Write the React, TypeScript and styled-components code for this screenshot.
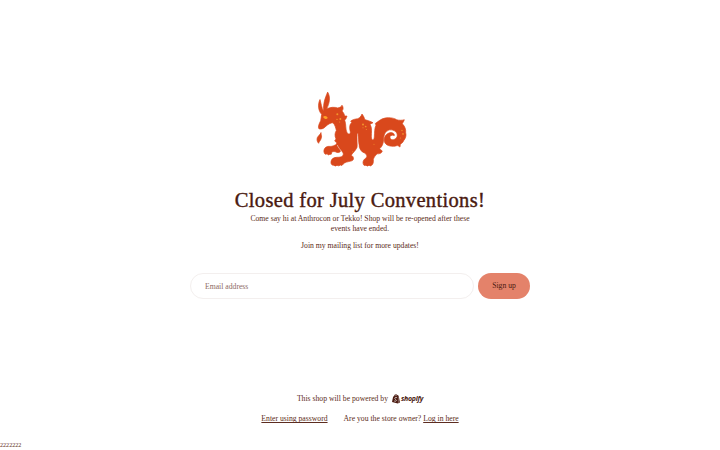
import React from 'react'
import styled, { createGlobalStyle } from 'styled-components'

const GlobalStyle = createGlobalStyle`
  * {
    box-sizing: border-box;
  }
  body {
    margin: 0;
    background: #fff;
    color: #5c2c20;
    font-family: 'Liberation Serif', serif;
    font-size: 7.7px;
    line-height: 9.6px;
  }
`

const Page = styled.div`
  display: flex;
  flex-direction: column;
  align-items: center;
  height: 450px;
  padding-top: 82px;
  overflow: hidden;
  & > * {
    flex-shrink: 0;
  }
`

const Logo = styled.svg`
  display: block;
  width: 110px;
  height: 91px;
`

const Title = styled.h1`
  margin: 15px 0 0;
  color: #4a1a10;
  font-size: 20.5px;
  font-weight: 400;
  line-height: 25px;
  letter-spacing: 0.34px;
  white-space: nowrap;
  -webkit-text-stroke: 0.4px #4a1a10;
`

const Message = styled.div`
  width: 230px;
  margin-top: 1px;
  line-height: 10px;
  text-align: center;
`

const Paragraph = styled.p`
  margin: 0 0 7px;
`

const Form = styled.form`
  display: flex;
  gap: 4px;
  width: 340px;
  margin-top: 15px;
`

const EmailInput = styled.input`
  flex: 1;
  min-width: 0;
  height: 26px;
  padding: 0 14px;
  border: 1px solid #f3efee;
  border-radius: 13px;
  outline: none;
  background: #fff;
  font: inherit;
  &::placeholder {
    color: #8d6a63;
    opacity: 1;
  }
`

const SignUpButton = styled.button`
  width: 52px;
  height: 26px;
  padding: 0;
  border: 0;
  border-radius: 13px;
  background: #e4826a;
  color: #4a1a10;
  font: inherit;
`

const Footer = styled.footer`
  display: flex;
  flex-direction: column;
  align-items: center;
  gap: 10px;
  margin-top: 95px;
`

const FooterRow = styled.div`
  display: flex;
  align-items: center;
  gap: ${({ $gap }: { $gap: number }) => $gap}px;
  height: 10px;
  white-space: nowrap;
`

const Link = styled.a`
  color: inherit;
  text-decoration: underline;
  text-underline-offset: 1px;
`

const Brand = styled.span`
  display: flex;
  align-items: center;
  gap: 0.5px;
  color: #4a1a10;
  font-family: 'Open Sans', sans-serif;
  font-size: 7px;
  font-style: italic;
  font-weight: 700;
  letter-spacing: -0.3px;
`

const Stray = styled.div`
  align-self: flex-start;
  margin-top: 16.5px;
  font-size: 6.1px;
`

const Dragon = () => (
  <Logo
    viewBox="0 0 330 270"
    preserveAspectRatio="none"
  >
    <g
      fill="#d9481c"
      stroke="#d9481c"
      strokeWidth="2"
      strokeLinejoin="round"
    >
      <path d="M50 96C39 85 38 65 45 52C48 62 50 78 56 87C54 64 60 48 68 30C77 45 74 62 65 80C75 74 90 74 98 77C105 76 109 73 111 69C116 75 115 82 111 86C117 92 118 97 119 101L126 101C124 108 122 111 119 113C124 126 121 141 126 150C131 157 136 155 136 148C133 135 133 127 140 120L137 116C144 111 150 110 158 109C165 106 168 102 171 95C176 101 178 107 180 112C188 114 196 116 204 121L195 125C202 136 199 150 199 163C200 175 207 175 208 163C209 149 208 138 213 128L211 123C220 117 228 109 240 107C255 104 270 108 275 112C283 114 290 114 298 112C296 118 293 121 292 124C300 132 303 141 302 150C305 160 301 168 296 174C293 181 289 182 286 185L285 193C281 190 278 188 275 189C262 193 246 190 240 181C233 168 242 152 257 150C264 150 269 154 268 159C260 156 254 159 255 166C258 174 270 173 276 163C280 149 267 141 254 142C241 145 236 158 236 170C235 184 231 192 224 198C227 202 230 202 232 205C230 212 222 214 216 213C211 219 206 224 205 230C206 238 204 245 200 247Q196 251 192 247Q187 252 183 247Q177 250 175 244C172 237 176 229 184 225C188 219 184 214 179 211C169 208 163 198 162 187C159 176 161 164 158 152C155 168 158 183 156 194C151 205 142 211 139 217C147 222 148 231 140 234C128 237 119 238 114 244Q111 250 106 246Q101 251 96 247Q90 252 87 247C77 249 75 236 82 228C90 221 100 225 109 222C117 217 116 211 111 206C104 199 97 190 94 179L89 175L93 169C88 159 90 150 94 144C92 136 90 127 84 121C77 121 70 125 63 131C57 138 48 141 42 139C38 134 42 124 47 115C49 108 48 102 50 96Z" />
      <path d="M98 181C91 189 81 192 71 191C60 191 54 202 58 211Q60 217 66 213Q70 219 75 214Q80 217 80 209C84 204 91 207 96 209C106 211 109 204 107 196Z" />
      <path d="M48 150C48 158 52 160 48 169C46 175 42 177 41 182C36 178 35 170 37 165C40 159 46 156 48 150Z" />
    </g>
    <path
      d="M97 187C99 194 106 200 109 206M158 153C157 167 158 180 161 190"
      fill="none"
      stroke="#fff"
      strokeWidth="1.5"
    />
    <path
      d="M54 104Q60 98 68 105Q68 111 60 110Z"
      fill="#ffa126"
    />
    <g fill="#f2952b">
      <circle cx="97" cy="96" r="3" />
      <circle cx="106" cy="110" r="3" />
      <circle cx="96" cy="111" r="2" />
      <circle cx="104" cy="119" r="1.5" />
      <circle cx="174" cy="126" r="3" />
      <circle cx="182" cy="132" r="2.5" />
      <circle cx="174" cy="136" r="1.5" />
      <circle cx="184" cy="141" r="1.5" />
      <circle cx="291" cy="144" r="2" />
      <circle cx="294" cy="154" r="2.5" />
      <circle cx="286" cy="166" r="1.5" />
      <circle cx="143" cy="207" r="1.5" />
      <circle cx="207" cy="185" r="1.5" />
    </g>
  </Logo>
)

const BagIcon = () => (
  <svg width="8.5" height="9.5" viewBox="0 0 16 18">
    <path
      d="M2 5L4 4C4 1 8-1 10 2L12 3L13 5L15 16L11 18L0 15Z"
      fill="#4a1a10"
    />
    <path
      d="M9.5 7C5 5 4 9 7 10.5C10 12.5 7 15 4 13"
      fill="none"
      stroke="#fff"
      strokeWidth="1.3"
    />
    <path
      d="M5.5 4C6 1.5 8.5 1 8.5 4"
      fill="none"
      stroke="#fff"
      strokeWidth="0.7"
    />
    <path
      d="M12 5V18"
      stroke="#fff"
      strokeWidth="0.6"
    />
  </svg>
)

const App = () => (
  <>
    <GlobalStyle />
    <Page>
      <Dragon />
      <Title>Closed for July Conventions!</Title>
      <Message>
        <Paragraph>
          Come say hi at Anthrocon or Tekko! Shop will be re-opened after these
          <br />
          events have ended.
        </Paragraph>
        <Paragraph>Join my mailing list for more updates!</Paragraph>
      </Message>
      <Form>
        <EmailInput
          type="email"
          placeholder="Email address"
        />
        <SignUpButton type="button">Sign up</SignUpButton>
      </Form>
      <Footer>
        <FooterRow $gap={4}>
          <span>This shop will be powered by</span>
          <Brand>
            <BagIcon />
            shopify
          </Brand>
        </FooterRow>
        <FooterRow $gap={16}>
          <Link>Enter using password</Link>
          <span>
            Are you the store owner? <Link>Log in here</Link>
          </span>
        </FooterRow>
      </Footer>
      <Stray>2222222</Stray>
    </Page>
  </>
)

export default App
